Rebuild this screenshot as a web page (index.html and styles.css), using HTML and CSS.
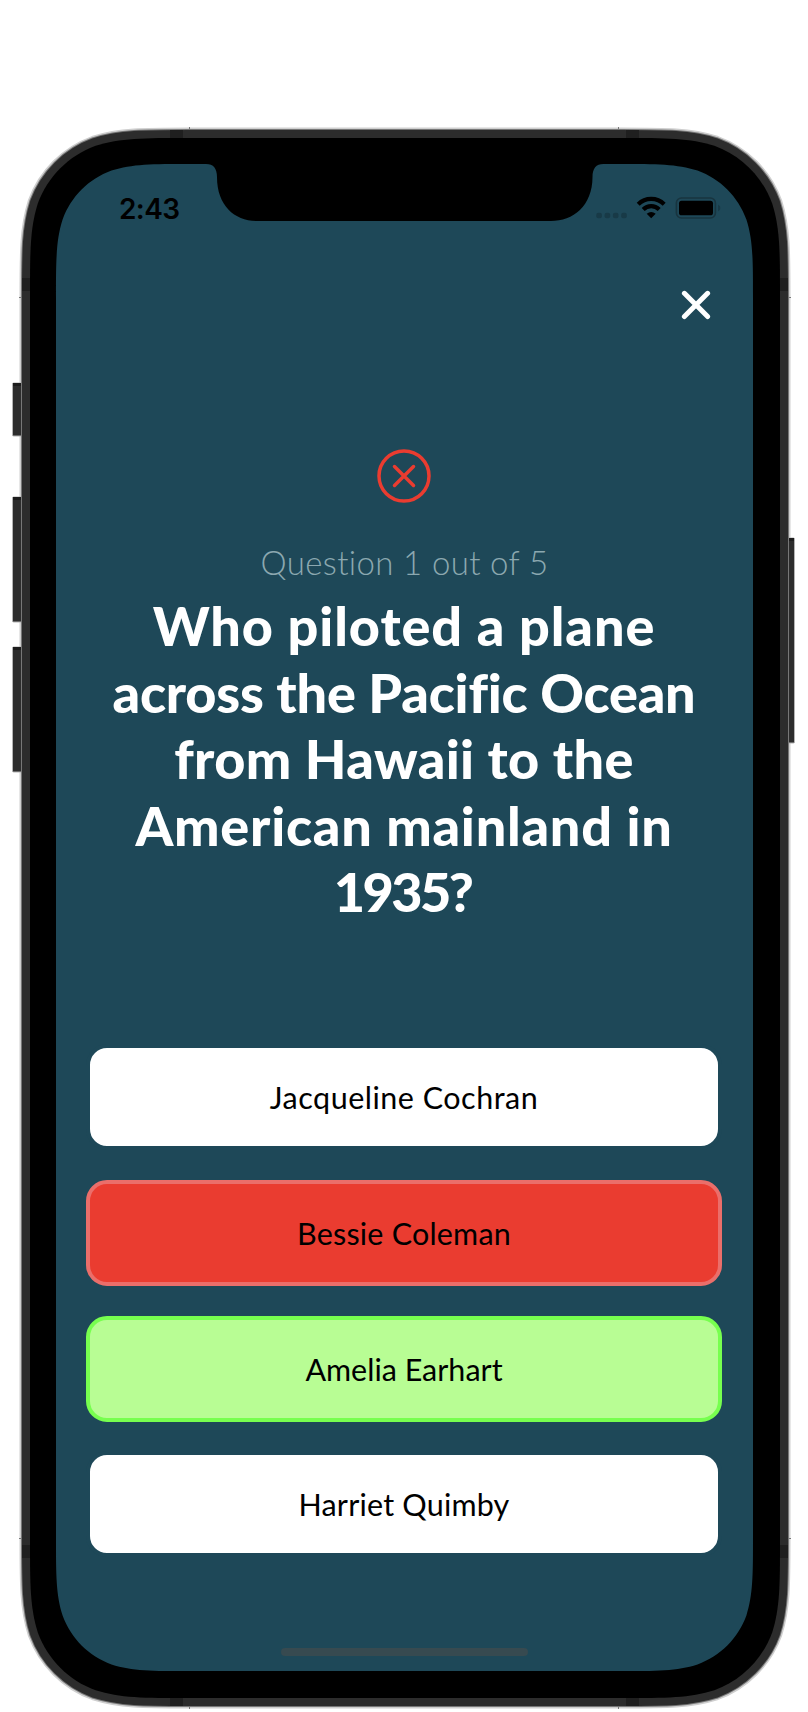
FILE: index.html
```
<!DOCTYPE html>
<html lang="en">
<head>
<meta charset="utf-8">
<title>Quiz</title>
<link rel="stylesheet" href="styles.css">
</head>
<body>
<main class="device">
  <svg class="frame" width="808" height="1712" viewBox="0 0 808 1712" aria-hidden="true">
    <defs>
      <path id="body" d="M30,297 C30,251.2 30,228.3 37.8,203.6 C47.6,176.7 68.7,155.6 95.6,145.8 C120.3,138 143.2,138 189,138 H621 C666.8,138 689.7,138 714.4,145.8 C741.3,155.6 762.4,176.7 772.2,203.6 C780,228.3 780,251.2 780,297 V1539 C780,1584.8 780,1607.7 772.2,1632.4 C762.4,1659.3 741.3,1680.4 714.4,1690.2 C689.7,1698 666.8,1698 621,1698 H189 C143.2,1698 120.3,1698 95.6,1690.2 C68.7,1680.4 47.6,1659.3 37.8,1632.4 C30,1607.7 30,1584.8 30,1539Z"/>
    </defs>
    <use href="#body" class="rim-outer"/>
    <g class="keys">
      <rect x="12.5" y="383" width="12" height="53" rx="1"/>
      <rect x="12.5" y="497" width="12" height="125" rx="1"/>
      <rect x="12.5" y="647" width="12" height="125" rx="1"/>
      <rect x="785" y="538" width="9.5" height="205" rx="1"/>
    </g>
    <g class="key-tops">
      <rect x="13" y="383" width="8" height="3"/>
      <rect x="13" y="497" width="8" height="3"/>
      <rect x="13" y="647" width="8" height="3"/>
      <rect x="789" y="538" width="5" height="3"/>
    </g>
    <use href="#body" class="rim-mid"/>
    <use href="#body" class="rim"/>
    <g class="bands">
      <rect x="170" y="130" width="13" height="8"/>
      <rect x="626" y="130" width="13" height="8"/>
      <rect x="170" y="1698" width="13" height="8"/>
      <rect x="626" y="1698" width="13" height="8"/>
      <rect x="22" y="278" width="8" height="13"/>
      <rect x="22" y="1545" width="8" height="13"/>
      <rect x="780" y="278" width="8" height="13"/>
      <rect x="780" y="1545" width="8" height="13"/>
    </g>
    <g class="ticks">
      <path d="M189.5 127v2M618.5 127v2M189.5 1707v2M618.5 1707v2M19 297.5h2M19 1538.5h2M789 297.5h2M789 1538.5h2"/>
    </g>
    <use href="#body"/>
    <path class="display" d="M56,298.5 C56,259.7 56,240.4 62.6,219.5 C70.9,196.7 88.7,178.9 111.5,170.6 C132.4,164 151.7,164 190.5,164 H206 C213.5,164 217,168.5 217,177 C217,206 235,221 257,221 H551 C573,221 592.5,206 592.5,177 C592.5,168.5 596,164 603.5,164 H618.5 C657.3,164 676.6,164 697.5,170.6 C720.3,178.9 738.1,196.7 746.4,219.5 C753,240.4 753,259.7 753,298.5 V1536.5 C753,1575.3 753,1594.6 746.4,1615.5 C738.1,1638.3 720.3,1656.1 697.5,1664.4 C676.6,1671 657.3,1671 618.5,1671 H190.5 C151.7,1671 132.4,1671 111.5,1664.4 C88.7,1656.1 70.9,1638.3 62.6,1615.5 C56,1594.6 56,1575.3 56,1536.5Z"/>
  </svg>
  <section class="screen">
    <header class="status">
      <span class="time">2:43</span>
      <svg class="indicators" width="126" height="24" viewBox="596 196 126 24" aria-hidden="true">
        <g class="faint">
          <rect x="596.3" y="212.7" width="5.6" height="5.6" rx="2"/>
          <rect x="604.6" y="212.7" width="5.6" height="5.6" rx="2"/>
          <rect x="612.9" y="212.7" width="5.6" height="5.6" rx="2"/>
          <rect x="621.2" y="212.7" width="5.6" height="5.6" rx="2"/>
          <path d="M718 204.8q2.4 1 2.4 3.2t-2.4 3.2z"/>
        </g>
        <path class="arc" d="M638.2 204.2a18.6 18.6 0 0 1 26 0M643.2 209.4a11.4 11.4 0 0 1 16 0"/>
        <path d="M651.2 218.2l-4.5-4.4q4.5-3.8 9 0z"/>
        <rect class="shell" x="676.4" y="198" width="39" height="20" rx="5"/>
        <rect x="679" y="200.7" width="34" height="14.6" rx="2.6"/>
      </svg>
    </header>
    <nav class="toolbar">
      <svg class="close" width="30" height="30" viewBox="0 0 30 30" role="img" aria-label="Close"><path d="M3.4 3.3l23.2 23.2M26.6 3.3L3.4 26.5"/></svg>
    </nav>
    <svg class="wrong" width="56" height="56" viewBox="0 0 56 56" aria-hidden="true"><circle cx="28" cy="28" r="25"/><path d="M18.5 18.5l19 19M37.5 18.5l-19 19"/></svg>
    <p class="progress">Question 1 out of 5</p>
    <h1 class="question">
      <span class="loose">Who piloted a plane</span>
      <span class="tight">across the Pacific Ocean</span>
      <span class="normal">from Hawaii to the</span>
      <span class="wide">American mainland in</span>
      <span class="figures">1935?</span>
    </h1>
    <div class="options">
      <div class="option spaced">Jacqueline Cochran</div>
      <div class="option incorrect">Bessie Coleman</div>
      <div class="option correct">Amelia Earhart</div>
      <div class="option">Harriet Quimby</div>
    </div>
    <div class="home-bar"></div>
  </section>
</main>
</body>
</html>
```
FILE: styles.css
```
body {
  margin: 0;
  background: #fff;
}

.device {
  display: grid;
  width: 808px;
  height: 1712px;
  overflow: hidden;
}

.frame,
.screen {
  grid-area: 1 / 1;
}

.keys { fill: #2d2d2d; stroke: #b4b4b4; stroke-width: 1; }
.key-tops { fill: #1d1d1d; }
.rim-outer { stroke: #cfcfcf; stroke-width: 21; }
.rim-mid { stroke: #777; stroke-width: 18; }
.rim { stroke: #2c2c2c; stroke-width: 16; }
.bands { fill: #1f1f1f; }
.ticks { stroke: #777; }
.display { fill: #1e4858; }

.screen {
  display: flex;
  flex-direction: column;
  align-items: center;
  box-sizing: border-box;
  width: 697px;
  height: 1507px;
  margin: 164px 0 0 56px;
}

.status {
  display: flex;
  justify-content: space-between;
  align-self: stretch;
  padding: 32px 31px 0 63px;
  height: 24px;
}

.time {
  font: 600 28px/26px Inter, sans-serif;
  letter-spacing: -0.6px;
}

.faint { fill: #183a47; }
.shell { fill: none; stroke: #18343f; stroke-width: 1.6; }
.arc { fill: none; stroke: #000; stroke-width: 4.2; }

.toolbar {
  align-self: flex-end;
  height: 30px;
  margin: 70px 42px 0 0;
}

.close {
  display: block;
  fill: none;
  stroke: #fff;
  stroke-width: 5;
  stroke-linecap: round;
}

.wrong {
  margin: 128px 1px 0 0;
  fill: none;
  stroke: #ea3c30;
  stroke-width: 3.5;
  stroke-linecap: round;
}

.progress {
  margin: 38px 0 0;
  font: 300 33px/40px Lato, sans-serif;
  font-variant-ligatures: none;
  letter-spacing: 0.35px;
  color: #8ca8b0;
  white-space: nowrap;
}

.question {
  display: flex;
  flex-direction: column;
  align-items: center;
  margin: 11px 1px 0 0;
  font: 900 54px/66.5px Lato, sans-serif;
  font-variant-ligatures: none;
  color: #fff;
  white-space: nowrap;
}

.loose { letter-spacing: 0.9px; }
.tight { letter-spacing: -0.2px; }
.normal { letter-spacing: 0.35px; }
.wide { letter-spacing: 0.75px; }
.figures { letter-spacing: -2.6px; padding-right: 3px; }

.options {
  display: grid;
  gap: 29.75px;
  width: 636px;
  margin: 118.5px 1px 0 0;
}

.option {
  display: flex;
  align-items: center;
  justify-content: center;
  box-sizing: border-box;
  height: 106px;
  border: 4px solid #1e4858;
  border-radius: 21px;
  background: #fff;
  font: 400 30.5px/40px Lato, sans-serif;
  font-variant-ligatures: none;
  letter-spacing: 0.2px;
  color: #000;
}

.spaced { letter-spacing: 0.5px; }
.incorrect { background: #ea3c30; border-color: #eb6e6a; }
.correct { background: #b8fd94; border-color: #77ff4f; letter-spacing: 0; }

.home-bar {
  width: 247px;
  height: 8.5px;
  margin-top: 90.5px;
  border-radius: 5px;
  background: #374a50;
}
```
